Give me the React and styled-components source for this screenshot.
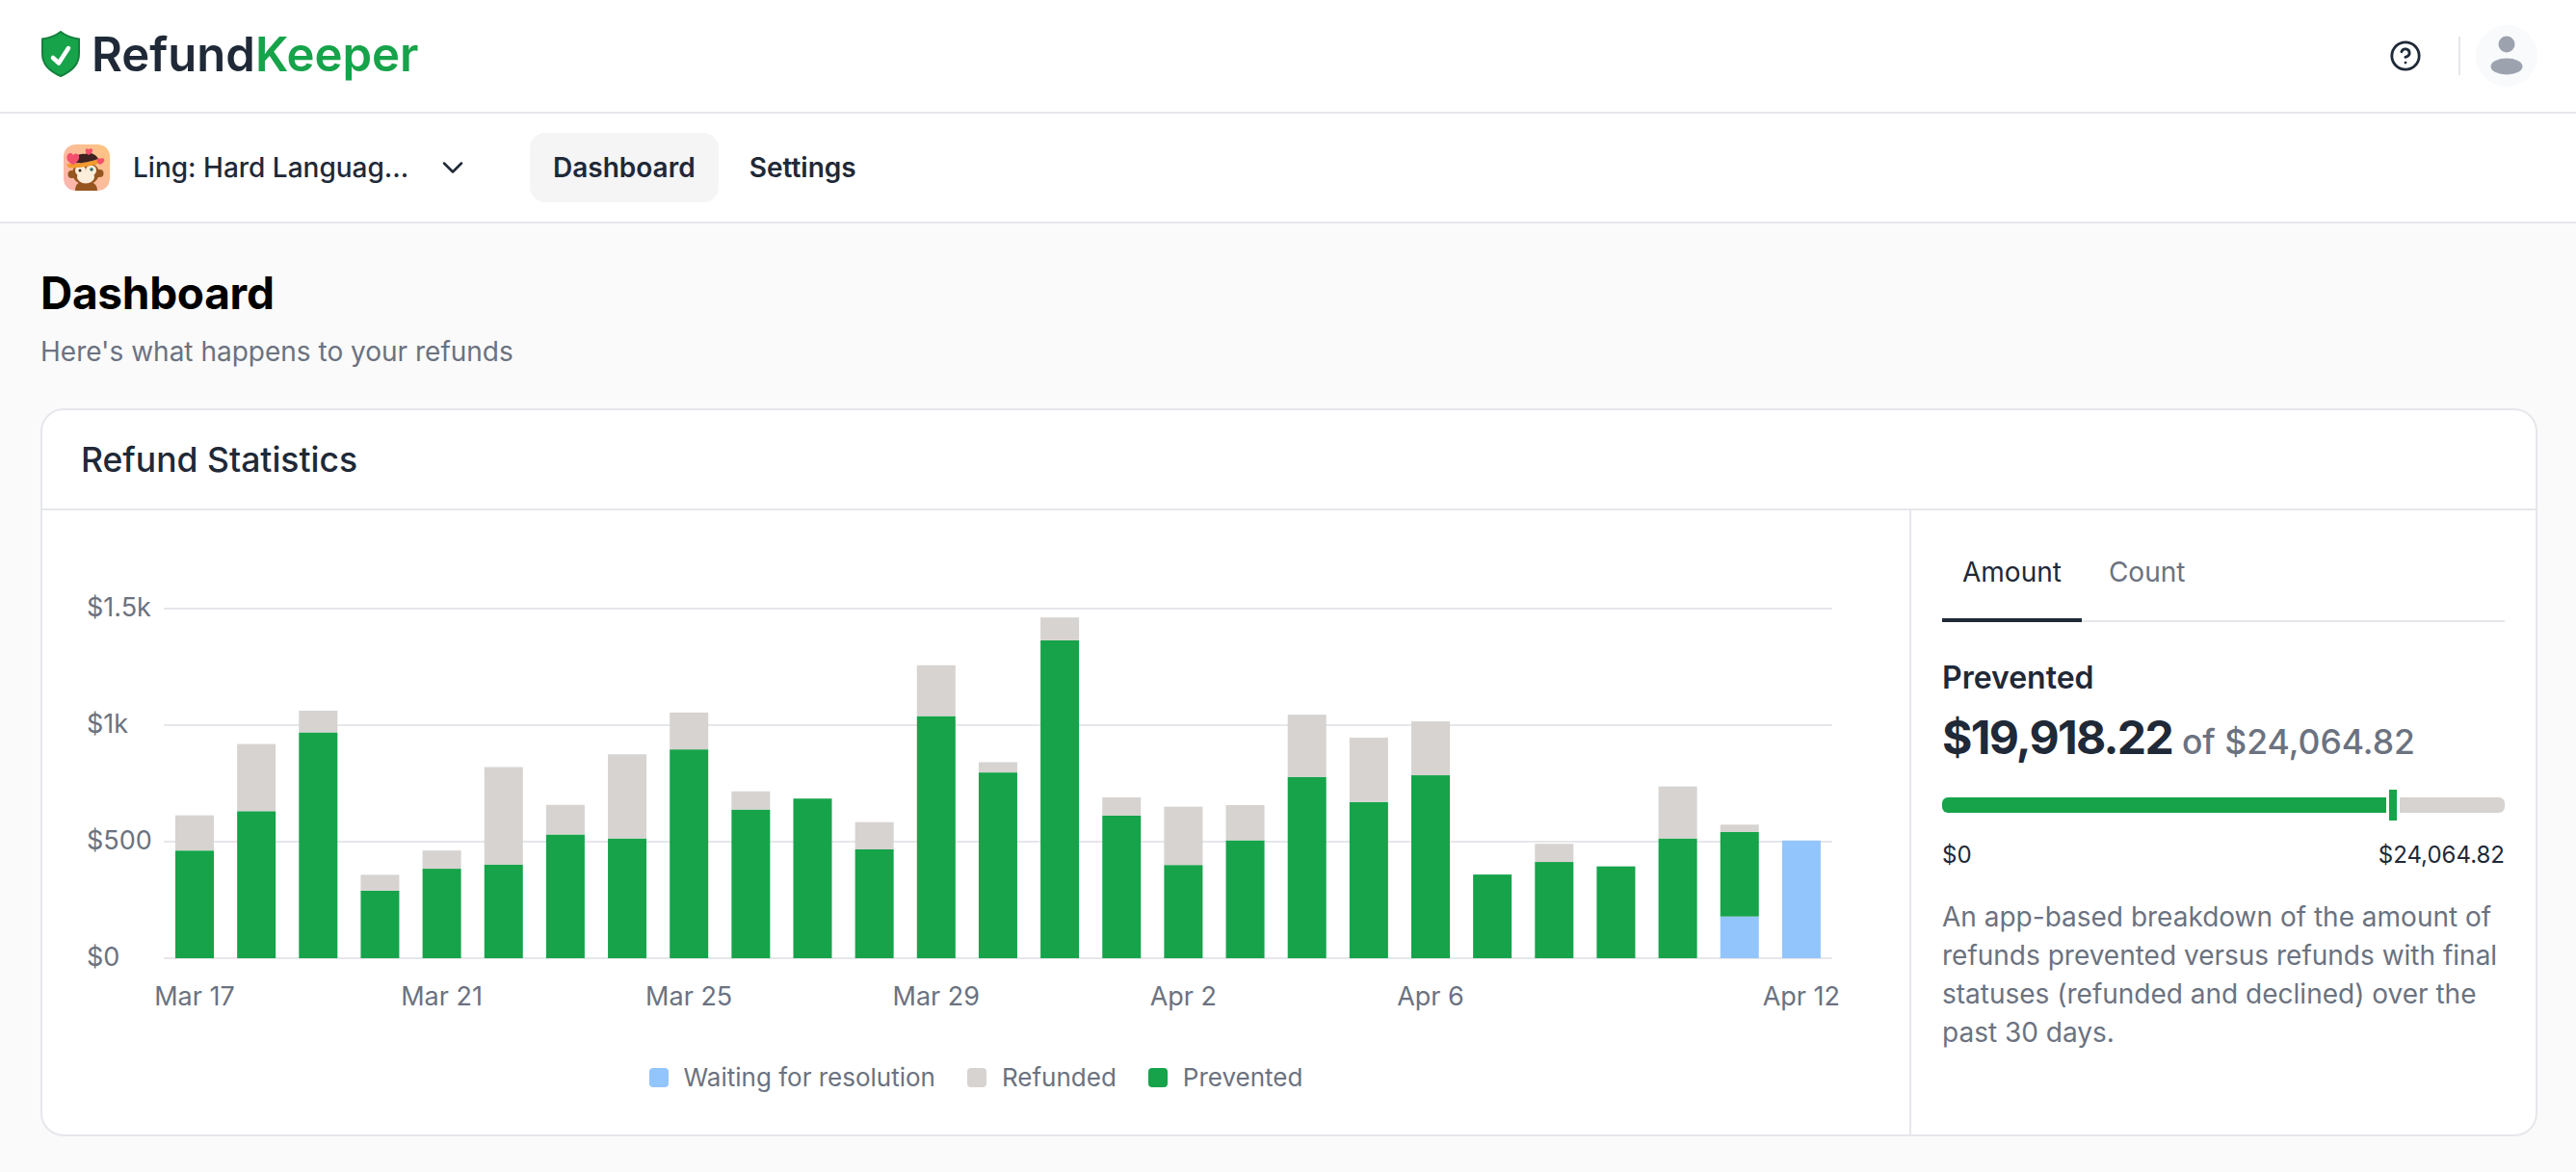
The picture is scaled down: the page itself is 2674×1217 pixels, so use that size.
import styled, { createGlobalStyle } from "styled-components";
import { ChevronDown, CircleHelp } from "lucide-react";

const GlobalStyle = createGlobalStyle`
  * { box-sizing: border-box; }
  html, body { margin: 0; padding: 0; }
  body {
    background: #fafafa;
    font-family: Inter, "Liberation Sans", sans-serif;
    color: #1f2937;
  }
`;

const GREEN = "#16a34a";
const GREY = "#d6d3d1";
const BLUE = "#93c5fd";

const days = [
  [462, 151], [631, 288], [969, 93], [290, 68], [384, 78], [402, 418], [531, 127],
  [514, 361], [896, 158], [638, 78], [685, 0], [467, 117], [1039, 218], [797, 44],
  [1364, 98], [612, 78], [400, 250], [506, 151], [778, 267], [670, 276], [785, 231],
  [359, 0], [413, 78], [394, 0], [514, 223], [363, 31, 179], [0, 0, 505],
];

const xLabels = { 0: "Mar 17", 4: "Mar 21", 8: "Mar 25", 12: "Mar 29", 16: "Apr 2", 20: "Apr 6", 26: "Apr 12" };
const yLabels = [["$1.5k", 1500], ["$1k", 1000], ["$500", 500], ["$0", 0]];

const Top = styled.header`
  height: 118px;
  display: flex;
  align-items: center;
  justify-content: space-between;
  padding: 0 40px 0 42px;
  background: #fff;
  border-bottom: 2px solid #e5e7eb;
`;

const Logo = styled.div`
  display: flex;
  align-items: center;
  gap: 11px;
  padding-bottom: 4px;
  font-size: 49px;
  font-weight: 600;
  line-height: 1;
  color: #1f2937;
  span { color: ${GREEN}; }
`;

const TopActions = styled.div`
  display: flex;
  align-items: center;
`;

const Separator = styled.div`
  width: 2px;
  height: 40px;
  margin: 0 16px 0 38px;
  background: #e5e7eb;
`;

const Avatar = styled.div`
  width: 64px;
  height: 64px;
  border-radius: 50%;
  background: #f9fafb;
  display: flex;
  align-items: center;
  justify-content: center;
`;

const Subnav = styled.nav`
  height: 114px;
  display: flex;
  align-items: center;
  padding: 0 0 0 66px;
  background: #fff;
  border-bottom: 2px solid #e5e7eb;
`;

const AppPicker = styled.div`
  display: flex;
  align-items: center;
  width: 484px;
  font-size: 28px;
  font-weight: 500;
  color: #1f2937;
  svg:first-child { border-radius: 12px; margin-right: 24px; }
  svg:last-child { margin-left: 28px; }
`;

const NavItem = styled.a`
  padding: 0 24px;
  height: 72px;
  display: flex;
  align-items: center;
  border-radius: 16px;
  font-size: 28px;
  font-weight: 600;
  color: #1f2937;
  background: ${(p) => (p.$active ? "#f5f5f5" : "transparent")};
  margin-right: ${(p) => (p.$active ? "8px" : "0")};
`;

const Main = styled.main`
  padding: 42px 40px 36px 42px;
`;

const Title = styled.h1`
  margin: 0;
  font-size: 46px;
  line-height: 60px;
  font-weight: 700;
  letter-spacing: -0.3px;
  color: #000;
`;

const Subtitle = styled.p`
  margin: 11px 0 0;
  font-size: 28px;
  line-height: 40px;
  color: #6b7280;
`;

const Card = styled.section`
  margin-top: 39px;
  background: #fff;
  border: 2px solid #e5e7eb;
  border-radius: 24px;
`;

const CardHead = styled.div`
  height: 104px;
  display: flex;
  align-items: center;
  padding: 0 40px;
  font-size: 35.500px;
  font-weight: 500;
  color: #1f2937;
  border-bottom: 2px solid #e5e7eb;
`;

const CardBody = styled.div`
  display: flex;
  height: 648px;
`;

const ChartPane = styled.div`
  flex: 1;
  padding-top: 61px;
`;

const Plot = styled.svg`
  display: block;
`;

const AxisText = styled.text`
  font-size: 27px;
  fill: #6b7280;
`;

const Legend = styled.div`
  display: flex;
  justify-content: center;
  gap: 33px;
  margin-top: 42px;
  font-size: 26px;
  line-height: 32px;
  color: #6b7280;
`;

const LegendItem = styled.div`
  display: flex;
  align-items: center;
  gap: 16px;
`;

const Swatch = styled.i`
  width: 20px;
  height: 20px;
  border-radius: 4px;
  background: ${(p) => p.$color};
`;

const Side = styled.aside`
  width: 650px;
  padding: 0 32px;
  border-left: 2px solid #e5e7eb;
`;

const Tabs = styled.div`
  display: flex;
  height: 116px;
  padding-top: 30px;
  border-bottom: 2px solid #e5e7eb;
`;

const Tab = styled.div`
  height: 86px;
  padding: 14px 21px 0;
  font-size: 28px;
  line-height: 40px;
  color: ${(p) => (p.$active ? "#1f2937" : "#6b7280")};
  border-bottom: 4px solid ${(p) => (p.$active ? "#1f2937" : "transparent")};
  margin-bottom: -2px;
  margin-right: ${(p) => (p.$active ? "7px" : "0")};
`;

const StatLabel = styled.div`
  margin-top: 38px;
  font-size: 32px;
  line-height: 40px;
  font-weight: 600;
  color: #1f2937;
`;

const StatRow = styled.div`
  margin-top: 12px;
  display: flex;
  align-items: baseline;
  gap: 10px;
  font-size: 35.500px;
  line-height: 60px;
  font-weight: 500;
  color: #6b7280;
  strong {
    font-size: 48px;
    font-weight: 700;
    letter-spacing: -1.7px;
    color: #1f2937;
  }
`;

const Meter = styled.div`
  margin-top: 19px;
  display: flex;
  align-items: center;
  height: 32px;
  gap: 3px;
`;

const MeterFill = styled.div`
  height: 16px;
  border-radius: ${(p) => p.$radius};
  background: ${(p) => p.$color};
  flex: ${(p) => p.$flex};
`;

const MeterMark = styled.div`
  width: 8px;
  height: 32px;
  background: ${GREEN};
`;

const Scale = styled.div`
  margin-top: 20px;
  display: flex;
  justify-content: space-between;
  font-size: 24px;
  line-height: 32px;
  color: #1f2937;
`;

const Description = styled.p`
  margin: 28px 0 0;
  font-size: 28px;
  line-height: 40px;
  color: #6b7280;
`;

const ShieldLogo = () => (
  <svg width="42" height="48" viewBox="0 0 42 48">
    <path
      d="M21 1c5 4 12 6.500 19 7.500V24c0 11-8.500 18.500-19 23C10.500 42.500 2 35 2 24V8.500C9 7.500 16 5 21 1z"
      fill={GREEN}
      stroke="#15803d"
      strokeWidth="2"
    />
    <path d="M13 28l6 5.500L29 18" fill="none" stroke="#fff" strokeWidth="4.500" strokeLinecap="round" strokeLinejoin="round" />
  </svg>
);

const MonkeyIcon = () => (
  <svg width="48" height="48" viewBox="0 0 48 48">
    <defs>
      <linearGradient id="appbg" x1="1" y1="0" x2="0" y2="1">
        <stop offset="0" stopColor="#fcc57f" />
        <stop offset="1" stopColor="#fbb4b4" />
      </linearGradient>
    </defs>
    <rect width="48" height="48" rx="12" fill="url(#appbg)" />
    <path d="M12 48c0-7 4-10 11-10s12 3 12 10z" fill="#96561f" />
    <ellipse cx="23" cy="30" rx="14" ry="11.500" fill="#96561f" />
    <circle cx="8.500" cy="31" r="4" fill="#96561f" />
    <circle cx="37.500" cy="30" r="4" fill="#96561f" />
    <circle cx="17.500" cy="27" r="5.500" fill="#fbeedb" />
    <circle cx="28.500" cy="27" r="5.500" fill="#fbeedb" />
    <ellipse cx="23" cy="34" rx="9" ry="6.500" fill="#fbeedb" />
    <circle cx="17" cy="27" r="1.500" fill="#3b2a20" />
    <circle cx="29" cy="26" r="1.800" fill="#2f6f6a" />
    <path d="M3 20c11 1 25-2 37-6l3 3c-10 5-26 8-38 7z" fill="#f39a2d" />
    <path d="M9 19c1-6 7-10 13-9 4-2 11-1 14 5-8 3-18 5-27 4z" fill="#3e2120" />
    <path d="M10 21c-5-2-8-6-6-10 2-3 5-2 6 0 2-2 5-2 6 1 1 3-2 7-6 9z" fill="#f4506d" />
    <path d="M26 11c-2-1-4-3-3-6 1-1 2-1 3 0 1-1 3-1 4 0 1 3-2 5-4 6z" fill="#f4506d" />
    <path d="M38 21c-2-1-4-3-3-6 1-1 2-1 3 0 1-1 3-1 4 0 1 3-2 5-4 6z" fill="#f4506d" />
  </svg>
);

const PersonIcon = () => (
  <svg width="34" height="42" viewBox="0 0 34 42">
    <circle cx="17" cy="9" r="8.500" fill="#9ca3af" />
    <ellipse cx="17" cy="32" rx="16.500" ry="8.500" fill="#9ca3af" />
  </svg>
);

const BAR_W = 40;
const PITCH = 64.15;
const FIRST_X = 138;
const BASE_Y = 404;
const PX = 363 / 1500;

const Chart = () => (
  <Plot width="1938" height="470" viewBox="0 0 1938 470">
    {yLabels.map(([label, value]) => (
      <g key={label}>
        <line x1="126" x2="1858" y1={BASE_Y - value * PX} y2={BASE_Y - value * PX} stroke="#e5e7eb" strokeWidth="2" />
        <AxisText x="46" y={BASE_Y - value * PX + 8}>{label}</AxisText>
      </g>
    ))}
    {days.map(([prevented, refunded, waiting = 0], i) => {
      const x = FIRST_X + i * PITCH;
      const w = waiting * PX;
      const p = prevented * PX;
      const r = refunded * PX;
      return (
        <g key={i}>
          <rect x={x} y={BASE_Y - w} width={BAR_W} height={w} fill={BLUE} />
          <rect x={x} y={BASE_Y - w - p} width={BAR_W} height={p} fill={GREEN} />
          <rect x={x} y={BASE_Y - w - p - r} width={BAR_W} height={r} fill={GREY} />
          {xLabels[i] && (
            <AxisText x={x + BAR_W / 2} y="453" textAnchor="middle">{xLabels[i]}</AxisText>
          )}
        </g>
      );
    })}
  </Plot>
);

export default function App() {
  return (
    <>
      <GlobalStyle />
      <Top>
        <Logo>
          <ShieldLogo />
          <div>Refund<span>Keeper</span></div>
        </Logo>
        <TopActions>
          <CircleHelp size={34} strokeWidth={2} color="#1f2937" />
          <Separator />
          <Avatar><PersonIcon /></Avatar>
        </TopActions>
      </Top>
      <Subnav>
        <AppPicker>
          <MonkeyIcon />
          Ling: Hard Languag...
          <ChevronDown size={36} strokeWidth={1.7} color="#1f2937" />
        </AppPicker>
        <NavItem $active>Dashboard</NavItem>
        <NavItem>Settings</NavItem>
      </Subnav>
      <Main>
        <Title>Dashboard</Title>
        <Subtitle>Here's what happens to your refunds</Subtitle>
        <Card>
          <CardHead>Refund Statistics</CardHead>
          <CardBody>
            <ChartPane>
              <Chart />
              <Legend>
                <LegendItem><Swatch $color={BLUE} />Waiting for resolution</LegendItem>
                <LegendItem><Swatch $color={GREY} />Refunded</LegendItem>
                <LegendItem><Swatch $color={GREEN} />Prevented</LegendItem>
              </Legend>
            </ChartPane>
            <Side>
              <Tabs>
                <Tab $active>Amount</Tab>
                <Tab>Count</Tab>
              </Tabs>
              <StatLabel>Prevented</StatLabel>
              <StatRow><strong>$19,918.22</strong> of $24,064.82</StatRow>
              <Meter>
                <MeterFill $color={GREEN} $flex="0 0 461px" $radius="6px 0 0 6px" />
                <MeterMark />
                <MeterFill $color={GREY} $flex="1" $radius="0 6px 6px 0" />
              </Meter>
              <Scale><span>$0</span><span>$24,064.82</span></Scale>
              <Description>
                An app-based breakdown of the amount of refunds prevented versus refunds with final statuses (refunded and declined) over the past 30 days.
              </Description>
            </Side>
          </CardBody>
        </Card>
      </Main>
    </>
  );
}
